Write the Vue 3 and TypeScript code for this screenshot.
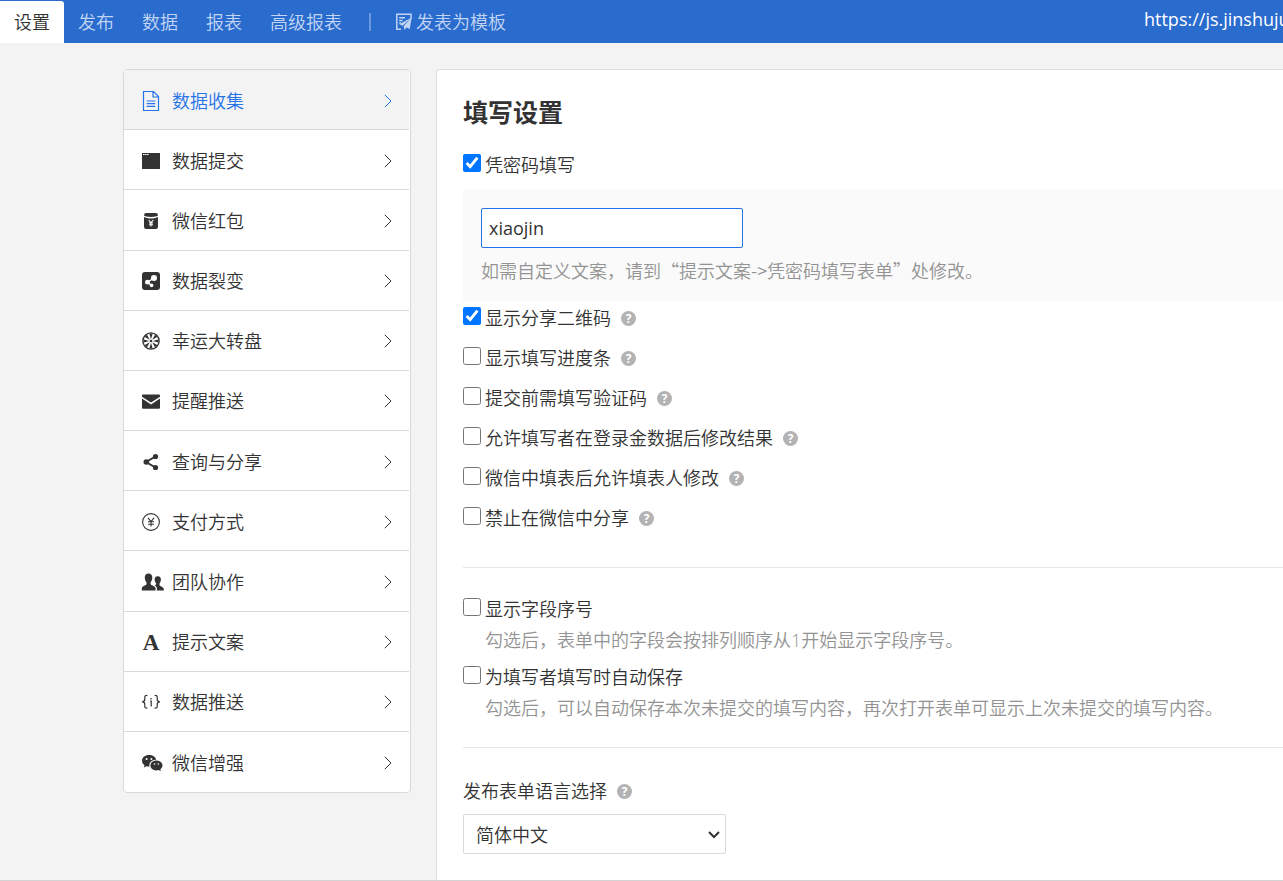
<script setup lang="ts">
import { ref } from 'vue'

interface Tab { label: string; active?: boolean }
interface MenuItem { icon: string; label: string; active?: boolean }
interface Option { id: string; label: string; checked: boolean }

const tabs: Tab[] = [
  { label: '设置', active: true },
  { label: '发布' },
  { label: '数据' },
  { label: '报表' },
  { label: '高级报表' },
]

const menu: MenuItem[] = [
  { icon: 'doc', label: '数据收集', active: true },
  { icon: 'window', label: '数据提交' },
  { icon: 'packet', label: '微信红包' },
  { icon: 'fission', label: '数据裂变' },
  { icon: 'wheel', label: '幸运大转盘' },
  { icon: 'mail', label: '提醒推送' },
  { icon: 'share', label: '查询与分享' },
  { icon: 'pay', label: '支付方式' },
  { icon: 'team', label: '团队协作' },
  { icon: 'letter', label: '提示文案' },
  { icon: 'code', label: '数据推送' },
  { icon: 'wechat', label: '微信增强' },
]

const usePassword = ref(true)
const password = ref('xiaojin')
const options = ref<Option[]>([
  { id: 'qr', label: '显示分享二维码', checked: true },
  { id: 'progress', label: '显示填写进度条', checked: false },
  { id: 'captcha', label: '提交前需填写验证码', checked: false },
  { id: 'edit', label: '允许填写者在登录金数据后修改结果', checked: false },
  { id: 'wx-edit', label: '微信中填表后允许填表人修改', checked: false },
  { id: 'wx-share', label: '禁止在微信中分享', checked: false },
])
const showIndex = ref(false)
const autoSave = ref(false)
const language = ref('zh-CN')
const wedges = [0, 45, 90, 135, 180, 225, 270, 315]
</script>

<template>
  <div class="page">
    <header class="topbar">
      <nav class="tabs">
        <a v-for="tab in tabs" :key="tab.label" href="#" class="tab" :class="{ active: tab.active }">{{ tab.label }}</a>
        <span class="split"></span>
        <a href="#" class="template-link">
          <svg width="18" height="18" viewBox="0 0 18 18" fill="none" stroke="currentColor" stroke-width="1.5">
            <path d="M6 16.2H1.8V1.2H16V6M4.2 4.7H10M4.2 7.4H7.5M4.2 10H6" />
            <path d="M16.6 4.6 4.4 11.2l3.2 1.6zM16.6 4.6 8.6 13.2l1 3.8 1.8-2.4 3.4 1.4z" fill="currentColor" stroke="none" />
          </svg>
          发表为模板
        </a>
      </nav>
      <a href="#" class="form-url">https://js.jinshuju</a>
    </header>

    <div class="body">
      <nav class="sidebar">
        <a v-for="item in menu" :key="item.icon" href="#" class="menu-item" :class="{ active: item.active }">
          <svg class="icon" width="24" height="24" viewBox="0 0 24 24" fill="currentColor">
            <g v-if="item.icon === 'doc'" fill="none" stroke="currentColor" stroke-width="1.2">
              <path d="M3.5 2.5H13.5L18.5 7.5V21.5H3.5zM13 2.7V8H18.3M6.7 12H15.2M6.7 14.7H15.2M6.7 17.4H15.2" />
            </g>
            <g v-else-if="item.icon === 'window'">
              <path d="M2 4H20V20H2z" />
              <path d="M3 5.5H8.8" stroke="#fff" stroke-width="1" stroke-dasharray="1.6 .4" />
            </g>
            <g v-else-if="item.icon === 'packet'">
              <path d="M6.2 4H15.8Q18 4 18 6.4L16.8 7.2Q11 8.6 5.2 7.2L4 6.4Q4 4 6.2 4z" />
              <path d="M4 8Q11 11 18 8V17.8Q18 20 15.8 20H6.2Q4 20 4 17.8z" />
              <path d="M8.8 11 11 13.8 13.2 11M11 13.8V17.6M9 14H13M9 15.8H13" fill="none" stroke="#fff" stroke-width="1.1" />
            </g>
            <g v-else-if="item.icon === 'fission'">
              <rect x="2" y="3" width="18" height="18" rx="3" />
              <path d="M7.5 13.2 14 9M7.5 13.2 11.4 16.4" stroke="#fff" stroke-width="1.4" />
              <g fill="#fff"><circle cx="7.4" cy="13.2" r="2.4" /><circle cx="14" cy="9" r="3" /><circle cx="11.6" cy="16.4" r="1.8" /></g>
            </g>
            <g v-else-if="item.icon === 'wheel'">
              <circle cx="11" cy="12" r="8.1" fill="none" stroke="currentColor" stroke-width="1.4" />
              <path v-for="angle in wedges" :key="angle" d="M11 10.2 9.4 4.8Q11 4.2 12.6 4.8z" :transform="`rotate(${angle} 11 12)`" />
              <circle cx="11" cy="12" r="1.3" />
            </g>
            <g v-else-if="item.icon === 'mail'">
              <path d="M3 5.5H19Q20 5.5 20 6.5V7.8L11 13.6 2 7.8V6.5Q2 5.5 3 5.5z" />
              <path d="M2 9.6 11 15.4 20 9.6V18.8Q20 19.8 19 19.8H3Q2 19.8 2 18.8z" />
            </g>
            <g v-else-if="item.icon === 'share'">
              <path d="M15.5 6.5 6 12 15.5 17.5" fill="none" stroke="currentColor" stroke-width="2" />
              <circle cx="15.5" cy="6.5" r="2.6" /><circle cx="6.3" cy="12" r="2.8" /><circle cx="15.5" cy="17.5" r="2.6" />
            </g>
            <g v-else-if="item.icon === 'pay'" fill="none" stroke="currentColor" stroke-width="1.1">
              <circle cx="11" cy="12" r="8.4" />
              <path d="M8 7.8 11 11.6 14 7.8M11 11.6V16.6M8 11.8H14M8 14.2H14" />
            </g>
            <g v-else-if="item.icon === 'team'">
              <path d="M8.5 3.5C11 3.5 12.5 5.2 12.3 8 12.2 10 11.4 11.3 10.6 12.2V14.2C11.6 15.6 15.4 15.8 15.6 18.4V20.5H1.8V18.4C2 15.8 5.6 15.6 6.5 14.2V12.2C5.6 11.3 4.9 10 4.8 8 4.6 5.2 6 3.5 8.5 3.5z" />
              <path d="M17.8 6.3C20 6.3 21 7.8 20.9 9.8 20.8 11.5 20.2 12.6 19.5 13.4V15.2C20.3 16.6 23.6 16.6 23.8 19V20.5H16.9V18.2C16.6 16.5 15.4 15.7 14.5 15.2 15.6 15 16 14.6 16.2 14V13.4C14.2 11.2 13.5 6.3 17.8 6.3z" />
            </g>
            <text v-else-if="item.icon === 'letter'" x="11" y="20" text-anchor="middle" class="letter">A</text>
            <g v-else-if="item.icon === 'code'" fill="none" stroke="currentColor" stroke-width="1.2">
              <path d="M7.4 5.5Q4.7 5.2 4.8 7.4V9.6Q4.8 11.6 2.2 11.8 4.8 12 4.8 14V16.2Q4.7 18.4 7.4 18.1M14.6 5.5Q17.3 5.2 17.2 7.4V9.6Q17.2 11.6 19.8 11.8 17.2 12 17.2 14V16.2Q17.3 18.4 14.6 18.1M11 8V9.6M10.2 11.2H11.2V16.4" />
            </g>
            <g v-else>
              <path d="M9 4C4.9 4 2 6.5 2 9.8 2 11.7 3 13.2 4.5 14.3L3.8 16.6 6.5 15.2Q8 15.7 9.5 15.5C8.6 11.6 11.8 8.6 16.2 8.8 15.6 6 12.7 4 9 4z" />
              <path d="M16.4 9.6C12.9 9.6 10.4 11.8 10.4 14.5 10.4 17.3 12.9 19.4 16.4 19.4Q17.6 19.4 18.7 19L20.8 20.2 20.3 18.2C21.7 17.3 22.5 16 22.5 14.5 22.5 11.8 19.8 9.6 16.4 9.6z" />
              <g fill="#fff"><circle cx="6.6" cy="8" r="1" /><circle cx="11.4" cy="8" r="1" /><circle cx="14.5" cy="13" r=".8" /><circle cx="18.3" cy="13" r=".8" /></g>
            </g>
          </svg>
          <span class="menu-label">{{ item.label }}</span>
          <svg class="chevron" width="8" height="14" viewBox="0 0 8 14" fill="none" stroke="currentColor" stroke-width="1"><path d="M.8 .8 7 7 .8 13.2" /></svg>
        </a>
      </nav>

      <main class="panel">
        <h1>填写设置</h1>
        <label class="check-row"><input v-model="usePassword" type="checkbox">凭密码填写</label>
        <div class="password-box">
          <input v-model="password" type="text" class="text-input" aria-label="填写密码">
          <p class="hint cjk">如需自定义文案，请到“提示文案-&gt;凭密码填写表单”处修改。</p>
        </div>
        <div v-for="option in options" :key="option.id" class="option">
          <label class="check-row"><input v-model="option.checked" type="checkbox">{{ option.label }}</label>
          <button type="button" class="help">?</button>
        </div>

        <section class="group">
          <label class="check-row"><input v-model="showIndex" type="checkbox">显示字段序号</label>
          <p class="hint indent">勾选后，表单中的字段会按排列顺序从1开始显示字段序号。</p>
          <label class="check-row"><input v-model="autoSave" type="checkbox">为填写者填写时自动保存</label>
          <p class="hint indent">勾选后，可以自动保存本次未提交的填写内容，再次打开表单可显示上次未提交的填写内容。</p>
        </section>

        <section class="language">
          <div class="language-title">
            <label for="language">发布表单语言选择</label>
            <button type="button" class="help">?</button>
          </div>
          <div class="select-wrap">
            <select id="language" v-model="language" class="select">
              <option value="zh-CN">简体中文</option>
              <option value="en">English</option>
            </select>
            <svg class="select-arrow" width="12" height="8" viewBox="0 0 12 8" fill="none" stroke="#333" stroke-width="2"><path d="M1 1 6 6 11 1" /></svg>
          </div>
        </section>
      </main>
    </div>
  </div>
</template>

<style>
body {
  margin: 0;
  background: #f3f3f3;
}
</style>

<style scoped>
.page,
.page * {
  box-sizing: border-box;
}

.page {
  display: flex;
  flex-direction: column;
  height: 100vh;
  overflow: hidden;
  border-bottom: 1px solid #d2d2d2;
  background: #f3f3f3;
  color: #333;
  font: 18px/24px "Open Sans", "Noto Sans CJK SC", sans-serif;
  font-weight: 350;
}

a {
  color: inherit;
  text-decoration: none;
}

.topbar {
  display: flex;
  flex: none;
  justify-content: space-between;
  height: 43px;
  padding-top: 1px;
  background: #2a6bce;
  color: #c2d6f3;
}

.tabs {
  display: flex;
}

.tab {
  display: flex;
  align-items: center;
  padding: 0 14px;
}

.tab.active {
  border-radius: 0 3px 0 0;
  background: #fff;
  color: #333;
}

.split {
  align-self: center;
  width: 2px;
  height: 18px;
  margin: 0 24px 0 13px;
  background: #6a98de;
}

.template-link {
  display: flex;
  align-items: center;
  gap: 3px;
}

.form-url {
  width: 139px;
  overflow: hidden;
  padding-top: 6px;
  color: #fff;
  font-weight: 400;
  white-space: nowrap;
}

.body {
  display: flex;
  flex: 1;
  align-items: flex-start;
  gap: 25px;
  min-height: 0;
  padding: 26px 0 0 123px;
}

.sidebar {
  display: grid;
  grid-auto-rows: 1fr;
  flex: none;
  width: 288px;
  min-height: 724px;
  padding-right: 1px;
  border: 1px solid #d9d9d9;
  border-radius: 4px;
  background: #fff;
}

.menu-item {
  display: flex;
  align-items: center;
  padding: 2px 17px 0 16px;
  border-bottom: 1px solid #d9d9d9;
}

.menu-item:last-child {
  border-bottom: 0;
}

.menu-item.active {
  background: #f3f3f3;
  color: #2672e8;
}

.icon {
  flex: none;
}

.menu-label {
  flex: 1;
  padding-left: 8px;
}

.letter {
  font: bold 23px "Liberation Serif", serif;
}

.panel {
  flex: 1;
  align-self: stretch;
  min-width: 0;
  padding: 22px 0 0 26px;
  border: 1px solid #dedede;
  border-width: 1px 0 0 1px;
  border-radius: 4px 0 0 0;
  background: #fff;
}

h1 {
  margin: 0 0 17px;
  font-size: 25px;
  font-weight: 700;
  line-height: 40px;
}

.check-row {
  display: flex;
  align-items: center;
  gap: 4px;
  min-height: 32px;
}

.check-row input {
  flex: none;
  width: 18px;
  height: 18px;
  margin: 0 0 4px;
}

.password-box {
  min-height: 112px;
  margin-top: 9px;
  padding: 18px 18px 0;
  background: #fafafa;
}

.text-input {
  display: block;
  width: 262px;
  height: 40px;
  padding: 0 7px;
  border: 1px solid #2672e8;
  border-radius: 2px;
  outline: 0;
  background: #fff;
  color: #333;
  font: 18px "Open Sans", "Noto Sans CJK SC", sans-serif;
}

.hint {
  margin: 3px 0 0;
  color: #939393;
  white-space: nowrap;
}

.cjk {
  margin-top: 10px;
  font-family: "Noto Sans CJK SC", sans-serif;
}

.option {
  display: flex;
  align-items: center;
  gap: 10px;
  margin-bottom: 8px;
}

.help {
  width: 15px;
  height: 15px;
  padding: 0;
  border: 0;
  border-radius: 50%;
  background: #b3b3b3;
  color: #fff;
  font: bold 12px/15px "Open Sans", sans-serif;
  text-align: center;
}

.group {
  margin-top: 33px;
  padding: 25px 0 27px;
  border: 1px solid #e8e8e8;
  border-width: 1px 0;
}

.group .hint + .check-row {
  margin-top: 9px;
}

.indent {
  padding-left: 22px;
}

.language {
  padding-top: 31px;
}

.language-title {
  display: flex;
  align-items: center;
  gap: 10px;
  margin-bottom: 11px;
}

.select-wrap {
  position: relative;
  width: 263px;
}

.select {
  width: 100%;
  height: 40px;
  padding: 0 32px 0 12px;
  border: 1px solid #d9d9d9;
  border-radius: 2px;
  appearance: none;
  background: #fff;
  color: #333;
  font: 350 18px "Noto Sans CJK SC", sans-serif;
}

.select-arrow {
  position: absolute;
  top: 17px;
  right: 6px;
  pointer-events: none;
}
</style>
